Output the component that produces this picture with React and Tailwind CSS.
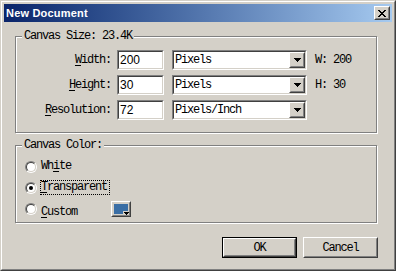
import React from "react";

const mono = "font-['Liberation_Mono',monospace] text-[12px] tracking-[-1.2px] text-black";

function Sunken({ className = "", children }) {
  return (
    <div className={`border border-t-[#808080] border-l-[#808080] border-r-white border-b-white ${className}`}>
      <div className="flex h-full w-full items-center border border-t-[#404040] border-l-[#404040] border-r-[#d4d0c8] border-b-[#d4d0c8] bg-white">
        {children}
      </div>
    </div>
  );
}

function Raised({ className = "", children }) {
  return (
    <div className={`border border-t-white border-l-white border-r-[#404040] border-b-[#404040] ${className}`}>
      <div className="relative flex h-full w-full items-center justify-center border border-t-[#d4d0c8] border-l-[#d4d0c8] border-r-[#808080] border-b-[#808080] bg-[#d4d0c8]">
        {children}
      </div>
    </div>
  );
}

const Arrow = () => (
  <svg width="7" height="4" viewBox="0 0 7 4" shapeRendering="crispEdges">
    <path d="M0 0h7v1H0zM1 1h5v1H1zM2 2h3v1H2zM3 3h1v1H3z" fill="#000" />
  </svg>
);

function Group({ title, className = "", children }) {
  return (
    <div className={`relative w-[362px] border border-[#808080] shadow-[inset_1px_1px_0_#fff,1px_1px_0_#fff] ${className}`}>
      <span className={`absolute left-[6px] top-[-8px] bg-[#d4d0c8] px-[2px] leading-[14px] ${mono}`}>{title}</span>
      {children}
    </div>
  );
}

function Radio({ checked }) {
  return (
    <div className="h-[12px] w-[12px] shrink-0 rounded-full border border-t-[#808080] border-l-[#808080] border-r-white border-b-white">
      <div className="flex h-full w-full items-center justify-center rounded-full border border-t-[#404040] border-l-[#404040] border-r-[#d4d0c8] border-b-[#d4d0c8] bg-white">
        {checked && <div className="h-[4px] w-[4px] rounded-full bg-black" />}
      </div>
    </div>
  );
}

const rows = [
  { key: "W", rest: "idth:", value: "200", unit: "Pixels", side: "W: 200" },
  { key: "H", rest: "eight:", value: "30", unit: "Pixels", side: "H: 30" },
  { key: "R", rest: "esolution:", value: "72", unit: "Pixels/Inch", side: "" },
];

export default function App() {
  return (
    <div className="h-[271px] w-[396px] overflow-hidden border border-t-[#d4d0c8] border-l-[#d4d0c8] border-r-[#404040] border-b-[#404040]">
      <div className="h-full w-full border border-t-white border-l-white border-r-[#808080] border-b-[#808080] bg-[#d4d0c8] p-[2px]">
        {/* title bar */}
        <div className="flex h-[18px] items-center bg-gradient-to-r from-[#0a246a] to-[#a6caf0] pl-[2px] pr-[2px]">
          <span className="font-['Liberation_Sans',Arial,sans-serif] text-[11px] font-bold tracking-[0.2px] text-white">
            New Document
          </span>
          <Raised className="ml-auto h-[14px] w-[16px]">
            <svg width="8" height="7" viewBox="0 0 8 7" shapeRendering="crispEdges">
              <path
                d="M0 0h2v1H0zM6 0h2v1H6zM1 1h2v1H1zM5 1h2v1H5zM2 2h4v1H2zM3 3h2v1H3zM2 4h4v1H2zM1 5h2v1H1zM5 5h2v1H5zM0 6h2v1H0zM6 6h2v1H6z"
                fill="#000"
              />
            </svg>
          </Raised>
        </div>

        <div className="pl-[11px]">
          {/* canvas size */}
          <Group title="Canvas Size: 23.4K" className="mt-[14px] pt-[13px] pb-[12px]">
            <div className="flex flex-col gap-[5px]">
              {rows.map((r) => (
                <div key={r.key} className="flex h-[20px] items-center">
                  <div className={`w-[95px] text-right ${mono}`}>
                    <span className="underline underline-offset-2">{r.key}</span>
                    {r.rest}
                  </div>
                  <Sunken className="ml-[6px] h-[20px] w-[47px]">
                    <span className="pl-[1px] font-['Liberation_Sans',Arial,sans-serif] text-[12px] text-black">{r.value}</span>
                  </Sunken>
                  <Sunken className="ml-[8px] h-[20px] w-[135px]">
                    <span className={`flex-1 pl-[1px] ${mono}`}>{r.unit}</span>
                    <Raised className="h-[16px] w-[16px]">
                      <Arrow />
                    </Raised>
                  </Sunken>
                  {r.side && <span className={`ml-[8px] ${mono}`}>{r.side}</span>}
                </div>
              ))}
            </div>
          </Group>

          {/* canvas color */}
          <Group title="Canvas Color:" className="mt-[12px] pt-[10px] pb-[3px]">
            <div className="flex h-[21px] items-center pl-[9px]">
              <Radio />
              <span className={`ml-[3px] border border-transparent leading-[13px] ${mono}`}>
                Wh<span className="underline underline-offset-2">i</span>te
              </span>
            </div>
            <div className="flex h-[21px] items-center pl-[9px]">
              <Radio checked />
              <span className={`ml-[3px] border border-dotted border-black pr-[2px] leading-[13px] ${mono}`}>
                <span className="underline underline-offset-2">T</span>ransparent
              </span>
            </div>
            <div className="flex h-[21px] items-center pl-[9px]">
              <Radio />
              <div className="ml-[3px] w-[71px]">
                <span className={`border border-transparent leading-[13px] ${mono}`}>
                  <span className="underline underline-offset-2">C</span>ustom
                </span>
              </div>
              <Raised className="h-[16px] w-[20px]">
                <div className="h-[10px] w-[14px] bg-[#3a6ea5]" />
                <div className="absolute right-[0px] bottom-[0px] flex h-[4px] w-[6px] items-end justify-center bg-[#d4d0c8]">
                  <svg width="5" height="3" viewBox="0 0 5 3" shapeRendering="crispEdges">
                    <path d="M0 0h5v1H0zM1 1h3v1H1zM2 2h1v1H2z" fill="#000" />
                  </svg>
                </div>
              </Raised>
            </div>
          </Group>
        </div>

        {/* buttons */}
        <div className="mt-[14px] flex justify-end gap-[6px] pr-[14px]">
          <div className="h-[21px] w-[75px] border border-black">
            <Raised className="h-full w-full">
              <span className={mono}>OK</span>
            </Raised>
          </div>
          <Raised className="h-[21px] w-[75px]">
            <span className={mono}>Cancel</span>
          </Raised>
        </div>
      </div>
    </div>
  );
}
